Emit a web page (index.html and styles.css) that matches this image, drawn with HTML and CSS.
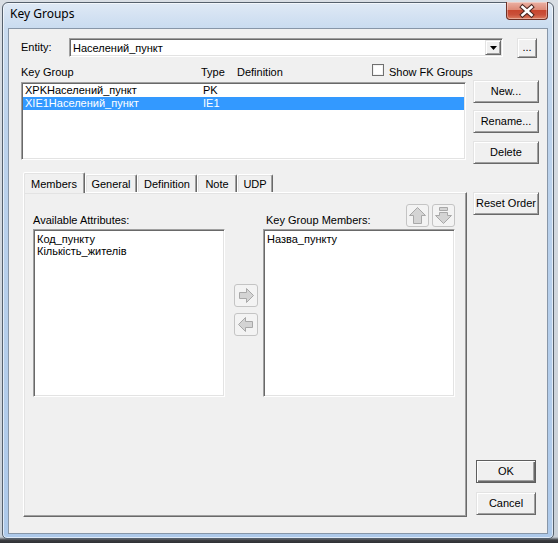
FILE: index.html
```html
<!DOCTYPE html>
<html>
<head>
<meta charset="utf-8">
<title>Key Groups</title>
<link rel="stylesheet" href="styles.css">
</head>
<body>
<div class="window">
  <div class="titlebar">
    <span class="title">Key Groups</span>
    <div class="close">
      <svg width="40" height="16" viewBox="0 0 40 16">
        <path d="M15.5 4 L24.5 12 M24.5 4 L15.5 12" stroke="#4a2620" stroke-width="4.6" stroke-linecap="square" fill="none"/>
        <path d="M15.5 4 L24.5 12 M24.5 4 L15.5 12" stroke="#ffffff" stroke-width="2.6" stroke-linecap="square" fill="none"/>
      </svg>
    </div>
  </div>
  <div class="client">
    <div class="entity-row">
      <span class="entity-lbl">Entity:</span>
      <div class="combo">
        <span class="combo-text">Населений_пункт</span>
        <span class="combo-btn">
          <svg width="7" height="4" viewBox="0 0 7 4"><path d="M0 0 H7 L3.5 4 Z" fill="#000"/></svg>
        </span>
      </div>
      <button class="btn dots">...</button>
    </div>
    <div class="main">
      <div class="leftcol">
        <div class="kg-header">
          <span class="h-name">Key Group</span>
          <span class="h-type">Type</span>
          <span class="h-def">Definition</span>
          <span class="chk"><span class="box"></span>Show FK Groups</span>
        </div>
        <div class="listbox kg-list">
          <div class="row"><span class="c-name">XPKНаселений_пункт</span><span class="c-type">PK</span></div>
          <div class="row sel"><span class="c-name">XIE1Населений_пункт</span><span class="c-type">IE1</span></div>
        </div>
        <div class="tabctl">
          <div class="tabs">
            <div class="tab active t-members">Members</div>
            <div class="tab t-general">General</div>
            <div class="tab t-definition">Definition</div>
            <div class="tab t-note">Note</div>
            <div class="tab t-udp">UDP</div>
          </div>
          <div class="panel">
            <div class="section">
              <div class="sec-head"><span class="sec-lbl">Available Attributes:</span></div>
              <div class="listbox attr-list">
                <div class="arow">Код_пункту</div>
                <div class="arow">Кількість_жителів</div>
              </div>
            </div>
            <div class="mid">
              <span class="ibtn">
                <svg width="22" height="21" viewBox="0 0 22 21"><path d="M4.5 7.5 H11.5 V3.5 L18.5 10.5 L11.5 17.5 V13.5 H4.5 Z" fill="#d4d4d4" stroke="#a8a8a8" stroke-width="1"/></svg>
              </span>
              <span class="ibtn">
                <svg width="22" height="21" viewBox="0 0 22 21"><path d="M17.5 7.5 H10.5 V3.5 L3.5 10.5 L10.5 17.5 V13.5 H17.5 Z" fill="#d4d4d4" stroke="#a8a8a8" stroke-width="1"/></svg>
              </span>
            </div>
            <div class="section">
              <div class="sec-head">
                <span class="sec-lbl members-lbl">Key Group Members:</span>
                <span class="ud">
                  <span class="ibtn">
                    <svg width="21" height="21" viewBox="0 0 21 21"><path d="M10.5 2.5 L18.5 10.5 H14.5 V18.5 H6.5 V10.5 H2.5 Z" fill="#d4d4d4" stroke="#a8a8a8" stroke-width="1"/></svg>
                  </span>
                  <span class="ibtn">
                    <svg width="21" height="21" viewBox="0 0 21 21"><path d="M6.5 2.5 H14.5 V5.5 H6.5 Z M6.5 7.5 H14.5 V10.5 H18.5 L10.5 18.5 L2.5 10.5 H6.5 Z" fill="#d4d4d4" stroke="#a8a8a8" stroke-width="1"/></svg>
                  </span>
                </span>
              </div>
              <div class="listbox attr-list">
                <div class="arow">Назва_пункту</div>
              </div>
            </div>
          </div>
        </div>
      </div>
      <div class="rightcol">
        <button class="btn rbtn b-new">New...</button>
        <button class="btn rbtn b-rename">Rename...</button>
        <button class="btn rbtn b-delete">Delete</button>
        <button class="btn rbtn b-reset">Reset Order</button>
        <button class="btn rbtn b-ok">OK</button>
        <button class="btn rbtn b-cancel">Cancel</button>
      </div>
    </div>
  </div>
</div>
</body>
</html>
```
FILE: styles.css
```css
* { box-sizing: border-box; }
html, body { margin: 0; padding: 0; }
body {
  width: 558px;
  height: 543px;
  overflow: hidden;
  background: linear-gradient(to bottom, #d9dee4 0, #c9d0d8 537px, #3c3e42 540px, #2e3034 543px);
  font-family: "Liberation Sans", Arial, sans-serif;
  font-size: 11px;
  color: #000;
}

.window {
  margin: 2px 0 0 2px;
  width: 552px;
  height: 537px;
  border: 1px solid #55606c;
  border-radius: 6px 6px 5px 5px;
  background: linear-gradient(to bottom, #dfe9f5 0, #cadcf0 24px, #bdd3ec 120px, #adc9ea 100%);
  box-shadow: inset 0 0 0 1px rgba(255,255,255,0.6);
  padding: 0 5px 4px 5px;
  display: flex;
  flex-direction: column;
}

.titlebar {
  height: 25px;
  display: flex;
  justify-content: space-between;
  align-items: flex-start;
}
.title {
  font-family: "Noto Sans", "Open Sans", sans-serif;
  font-size: 12px;
  line-height: 16px;
  padding: 3px 0 0 2px;
  color: #000;
}
.close {
  width: 42px;
  height: 18px;
  margin-top: -1px;
  border: 1px solid #6e3126;
  border-top: none;
  border-radius: 0 0 4px 4px;
  background: linear-gradient(to bottom, #eab1a4 0, #de8a77 45%, #c8462e 50%, #c9503a 75%, #dd7d60 100%);
  box-shadow: inset 0 0 0 1px rgba(255,255,255,0.35);
  display: flex;
  align-items: center;
  justify-content: center;
}
.close svg { display: block; }

.client {
  flex: 1;
  background: #f0f0f0;
  border: 1px solid #8796a8;
  padding: 9px 0 0 12px;
}

/* classic 3D edges */
.btn {
  font-family: "Liberation Sans", Arial, sans-serif;
  font-size: 11px;
  color: #000;
  background: #f0f0f0;
  border: 1px solid;
  border-color: #e3e3e3 #696969 #696969 #e3e3e3;
  box-shadow: inset 1px 1px 0 #ffffff, inset -1px -1px 0 #a0a0a0;
  padding: 0;
  margin: 0;
  line-height: 13px;
  text-align: center;
}
.listbox {
  background: #fff;
  border: 1px solid;
  border-color: #a0a0a0 #ffffff #ffffff #a0a0a0;
  box-shadow: inset 1px 1px 0 #696969, inset -1px -1px 0 #e3e3e3;
  padding: 1px;
}

/* entity row */
.entity-row {
  display: flex;
  height: 19px;
}
.entity-lbl {
  width: 48px;
  line-height: 19px;
}
.combo {
  width: 434px;
  height: 19px;
  background: #fff;
  border: 1px solid;
  border-color: #a0a0a0 #ffffff #ffffff #a0a0a0;
  box-shadow: inset 1px 1px 0 #696969, inset -1px -1px 0 #e3e3e3;
  padding: 1px;
  display: flex;
}
.combo-text {
  flex: 1;
  line-height: 15px;
  padding: 1px 0 0 2px;
}
.combo-btn {
  width: 16px;
  height: 15px;
  background: #f0f0f0;
  border: 1px solid;
  border-color: #e3e3e3 #696969 #696969 #e3e3e3;
  box-shadow: inset 1px 1px 0 #ffffff, inset -1px -1px 0 #a0a0a0;
  display: flex;
  align-items: center;
  justify-content: center;
}
.combo-btn svg { display: block; }
.dots {
  margin-left: 14px;
  width: 20px;
  height: 20px;
  line-height: 12px;
  padding-bottom: 3px;
}

/* main area */
.main {
  display: flex;
  margin-top: 6px;
}
.leftcol {
  width: 446px;
  display: flex;
  flex-direction: column;
}
.kg-header {
  height: 18px;
  line-height: 18px;
  display: flex;
  white-space: nowrap;
}
.h-name { width: 180px; flex: none; }
.h-type { width: 36px; flex: none; }
.h-def { width: 135px; flex: none; }
.chk {
  display: flex;
  align-items: flex-start;
  flex: none;
  white-space: nowrap;
}
.box {
  width: 12px;
  height: 12px;
  margin-top: 1px;
  margin-right: 5px;
  border: 1px solid #707070;
  background: #fff;
  box-shadow: inset 0 0 0 1px #f2f2f2;
}

.kg-list {
  margin-top: 1px;
  width: 445px;
  height: 78px;
  padding: 1px;
}
.row {
  display: flex;
  height: 13px;
  line-height: 13px;
  padding-left: 2px;
}
.row.sel {
  background: #3399ff;
  color: #fff;
}
.c-name { width: 178px; }

/* tabs */
.tabctl {
  margin: 12px 0 0 2px;
  width: 444px;
}
.tabs {
  display: flex;
  height: 20px;
  align-items: flex-start;
}
.tab {
  height: 18px;
  margin-top: 2px;
  border: 1px solid;
  border-bottom: none;
  border-color: #ffffff #696969 transparent #ffffff;
  border-radius: 2px 2px 0 0;
  box-shadow: inset -1px 0 0 #a0a0a0, inset 1px 1px 0 #e3e3e3;
  background: #f0f0f0;
  text-align: center;
  line-height: 13px;
  padding-top: 3px;
}
.tab.active {
  height: 21px;
  margin-top: 0;
  padding-top: 5px;
  position: relative;
  z-index: 1;
}
.t-members { width: 62px; }
.t-general { width: 52px; }
.t-definition { width: 60px; }
.t-note { width: 40px; }
.t-udp { width: 36px; }

.panel {
  width: 444px;
  height: 325px;
  border: 1px solid;
  border-color: #ffffff #696969 #696969 #ffffff;
  box-shadow: inset -1px -1px 0 #a0a0a0, inset 1px 1px 0 #e3e3e3;
  background: #f0f0f0;
  display: flex;
  padding-left: 9px;
}
.section {
  width: 192px;
  display: flex;
  flex-direction: column;
}
.sec-head {
  height: 36px;
  display: flex;
  align-items: flex-end;
  padding-bottom: 2px;
}
.sec-lbl {
  line-height: 13px;
}
.members-lbl { padding-left: 3px; }
.ud {
  margin-left: auto;
  display: flex;
  gap: 3px;
}
.ibtn {
  width: 23px;
  height: 23px;
  border: 1px solid #c4c4c4;
  border-radius: 3px;
  background: #f3f3f3;
  display: flex;
  align-items: center;
  justify-content: center;
}
.ibtn svg { display: block; }
.attr-list {
  width: 192px;
  height: 168px;
  padding: 3px 3px;
}
.arow {
  height: 12px;
  line-height: 12px;
}
.mid {
  width: 38px;
  padding: 91px 0 0 9px;
  display: flex;
  flex-direction: column;
  gap: 6px;
}
.mid .ibtn { width: 24px; }

/* right buttons */
.rightcol {
  width: 66px;
  margin-left: 6px;
  display: flex;
  flex-direction: column;
}
.rbtn {
  width: 66px;
  height: 23px;
}
.b-new { margin-top: 17px; }
.b-rename { margin-top: 7px; }
.b-delete { margin-top: 8px; }
.b-reset { margin-top: 28px; }
.b-ok {
  margin-top: 245px;
  margin-left: 3px;
  width: 60px;
  border-color: #5e5e5e;
  box-shadow: inset 1px 1px 0 #ffffff, inset -1px -1px 0 #696969, inset -2px -2px 0 #a0a0a0;
}
.b-cancel {
  margin-top: 9px;
  margin-left: 3px;
  width: 60px;
}
```
